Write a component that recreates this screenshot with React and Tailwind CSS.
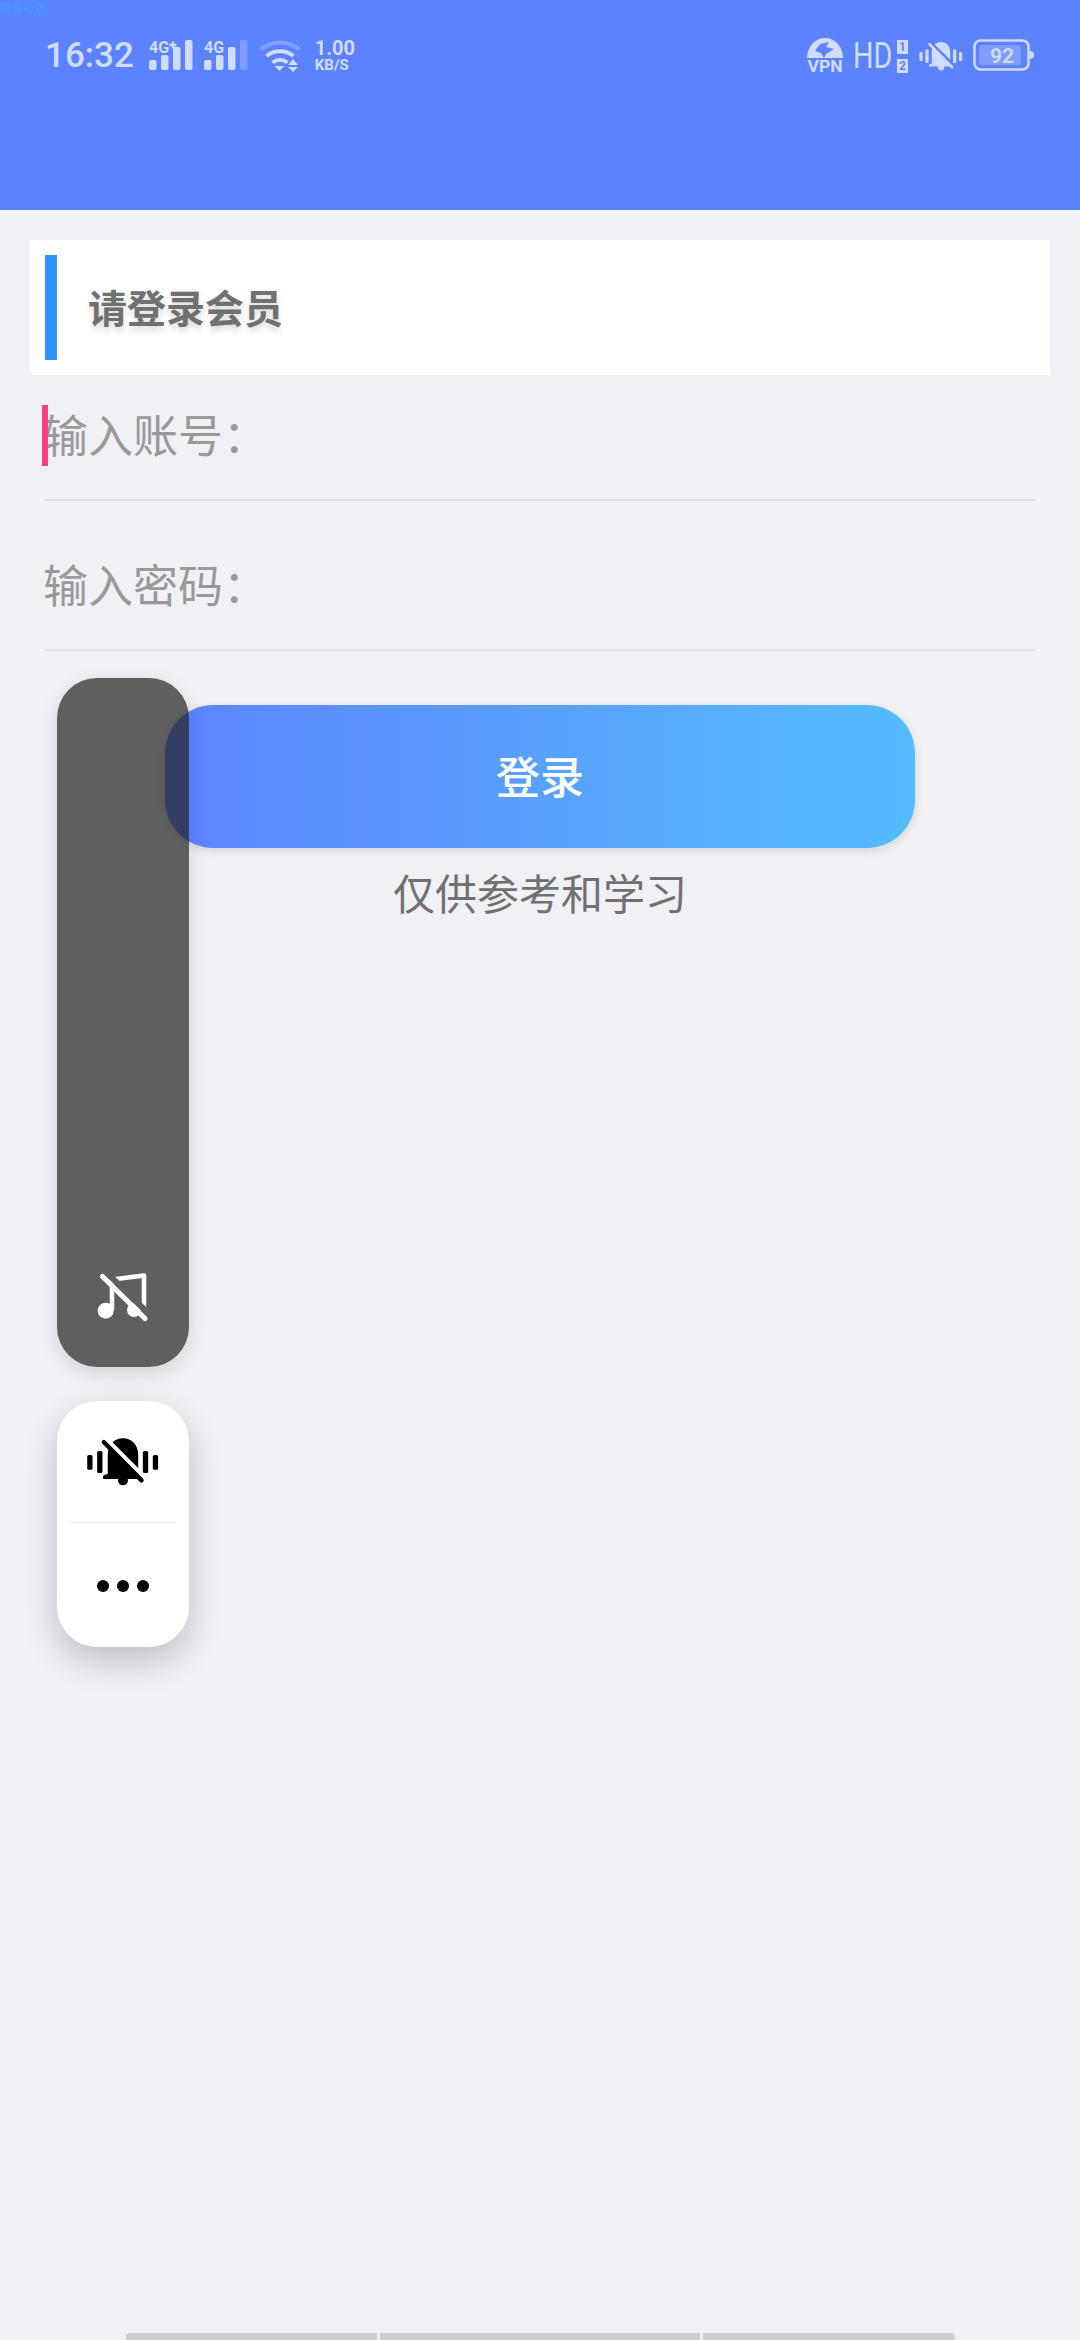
const statusColor = '#d0dbff';

function Signal({ label, plus, dimLast }) {
  return (
    <svg width="44" height="34" viewBox="0 0 44 34" className="block">
      <text x="0" y="14" fontFamily="Roboto, sans-serif" fontWeight="700" fontSize="16" fill={statusColor}>{label}</text>
      {plus && <path d="M24 2.5v7M20.5 6h7" stroke={statusColor} strokeWidth="2.4" />}
      <rect x="0" y="21" width="7.5" height="10" rx="2" fill={statusColor} />
      <rect x="12" y="16" width="7.5" height="15" rx="2" fill={statusColor} />
      <rect x="24" y="8" width="7.5" height="23" rx="2" fill={statusColor} />
      <rect x="36" y="1" width="7.5" height="30" rx="2" fill={statusColor} opacity={dimLast ? 0.3 : 1} />
    </svg>
  );
}

function Wifi() {
  return (
    <svg width="44" height="34" viewBox="0 0 44 34" className="block">
      <path d="M1.5 10.5C13 1 29 1 40.500 10.500" fill="none" stroke={statusColor} strokeOpacity="0.35" strokeWidth="4" />
      <path d="M7.500 17C15 10.500 27 10.500 34.500 17" fill="none" stroke={statusColor} strokeWidth="4" />
      <path d="M13.500 23.500C18 20 24 20 28.500 23.500" fill="none" stroke={statusColor} strokeWidth="4" />
      <path d="M15.500 27h10l-5 5z" fill={statusColor} />
      <path d="M34 20l5 6h-10z M29 28h10l-5 5z" fill={statusColor} />
    </svg>
  );
}

function Vpn() {
  return (
    <svg width="38" height="38" viewBox="0 0 38 38" className="block">
      <path d="M1 21C1.500 9 9 1 19 1S36.500 9 37 21z" fill={statusColor} />
      <path d="M9 14l5-7 9-2-3 5 8 2-8 5-2 4-3-5z" fill="#5c83ff" />
      <text x="19" y="35" textAnchor="middle" textLength="35" lengthAdjust="spacingAndGlyphs" fontFamily="Roboto, sans-serif" fontWeight="700" fontSize="17" fill={statusColor}>VPN</text>
    </svg>
  );
}

function HdBadge() {
  return (
    <div className="flex items-center gap-[6px]">
      <div className="w-[38px] whitespace-nowrap">
        <span className="block origin-left scale-x-[0.8] font-['Roboto',sans-serif] text-[36px] leading-[36px] text-[#d0dbff]">HD</span>
      </div>
      <div className="flex flex-col gap-[5px]">
        <span className="flex h-[14px] w-[11px] items-center justify-center bg-[#d0dbff] font-['Roboto',sans-serif] text-[12px] font-bold leading-none text-[#5c83ff]">1</span>
        <span className="flex h-[14px] w-[11px] items-center justify-center bg-[#d0dbff] font-['Roboto',sans-serif] text-[12px] font-bold leading-none text-[#5c83ff]">2</span>
      </div>
    </div>
  );
}

// same shape in the status bar and in the white panel, only the colours differ
function MutedBell({ width, height, fill, gap }) {
  return (
    <svg width={width} height={height} viewBox="130 555 240 160" className="block">
      <rect x="142" y="615" width="16" height="45" rx="5" fill={fill} />
      <rect x="172" y="603" width="16" height="67" rx="5" fill={fill} />
      <rect x="310" y="603" width="16" height="67" rx="5" fill={fill} />
      <rect x="340" y="615" width="16" height="45" rx="5" fill={fill} />
      <path d="M204 672V615C204 585 224 565 250 565S296 585 296 615V672L310 678V688H190V678Z" fill={fill} />
      <circle cx="250" cy="692" r="15" fill={fill} />
      <path d="M198 566L322 690" stroke={gap} strokeWidth="13" />
      <path d="M192 576L306 692" stroke={fill} strokeWidth="13" strokeLinecap="round" />
    </svg>
  );
}

function Battery() {
  return (
    <svg width="62" height="34" viewBox="0 0 62 34" className="block">
      <rect x="1.500" y="1.500" width="54" height="29" rx="6" fill="none" stroke={statusColor} strokeWidth="2.500" />
      <rect x="6" y="6" width="42" height="20" rx="3" fill={statusColor} opacity="0.3" />
      <path d="M57 12c3 0 4 2 4 4s-1 4-4 4z" fill={statusColor} />
      <text x="29" y="23.500" textAnchor="middle" fontFamily="Roboto, sans-serif" fontWeight="700" fontSize="21" fill={statusColor}>92</text>
    </svg>
  );
}

function MusicOff() {
  return (
    <svg width="56" height="50" viewBox="0 0 56 50" className="block">
      <circle cx="10.700" cy="37.700" r="8" fill="#fff" />
      <path d="M17 37V6.500L49 2.500V36" fill="none" stroke="#fff" strokeWidth="4.500" strokeLinejoin="round" />
      <circle cx="39" cy="37" r="7" fill="#fff" />
      <path d="M12 0L54 41" stroke="#606060" strokeWidth="6" />
      <path d="M7.500 3.500L50 45.500" stroke="#fff" strokeWidth="5" strokeLinecap="round" />
    </svg>
  );
}

function InputRow({ label, className }) {
  return (
    <div className={`flex items-end border-b-2 border-[#e2e2e6] pb-[43px] ${className}`}>
      <span className="ml-[-2px] text-[45px] leading-[44px] text-[#999999]">{label}</span>
    </div>
  );
}

export default function App() {
  return (
    <div className="relative h-[2340px] w-[1080px] overflow-hidden bg-[#f0f0f5] font-['Noto_Sans_CJK_SC','Noto_Sans',sans-serif]">
      <header className="relative h-[210px] bg-[#5c83ff]">
        <span className="absolute left-0 top-0 text-[12px] leading-[16px] text-[#3e9bff]">境留社区</span>
        <div className="flex items-center justify-between pl-[45px] pr-[45px] pt-[37px]">
          <div className="flex items-center">
            <span className="font-['Roboto',sans-serif] text-[35px] font-medium leading-[36px] text-[#d0dbff]">16:32</span>
            <div className="ml-[15px]"><Signal label="4G" plus /></div>
            <div className="ml-[11px]"><Signal label="4G" dimLast /></div>
            <div className="ml-[11px]"><Wifi /></div>
            <div className="ml-[12px] flex flex-col font-['Roboto',sans-serif] font-bold text-[#d0dbff]">
              <span className="text-[20px] leading-[19px]">1.00</span>
              <span className="text-[15px] leading-[15px]">KB/S</span>
            </div>
          </div>
          <div className="flex items-center">
            <Vpn />
            <div className="ml-[9px]"><HdBadge /></div>
            <div className="ml-[9px]"><MutedBell width={48} height={32} fill={statusColor} gap="#5c83ff" /></div>
            <div className="ml-[8px]"><Battery /></div>
          </div>
        </div>
      </header>

      <main className="px-[30px] pt-[30px]">
        <div className="flex h-[135px] items-center bg-white pl-[15px]">
          <div className="h-[105px] w-[12px] bg-[#3092ff]" />
          <span className="mb-[3px] ml-[31px] text-[39px] font-bold leading-[50px] text-[#707070] [text-shadow:0_4px_6px_rgba(0,0,0,0.15)]">请登录会员</span>
        </div>

        <div className="px-[15px]">
          <div className="relative">
            <InputRow label="输入账号：" className="h-[126px]" />
            <div className="absolute left-[-3px] top-[30px] h-[61px] w-[6px] bg-[#ff3d85]" />
          </div>
          <InputRow label="输入密码：" className="h-[150px]" />
        </div>

        <button className="mx-auto mt-[54px] flex h-[143px] w-[750px] items-center justify-center rounded-[48px] bg-linear-to-r from-[#5c83ff] to-[#54bcff] pb-[4px] text-[44px] font-medium leading-none text-white shadow-[0_3px_8px_rgba(0,0,0,0.12)]">
          登录
        </button>
        <p className="mt-[20px] text-center text-[42px] leading-[48px] text-[#707070]">仅供参考和学习</p>
      </main>

      <aside className="absolute left-[57px] top-[678px] flex w-[132px] flex-col gap-[34px]">
        <div className="flex h-[689px] flex-col items-center justify-end rounded-[40px] bg-[rgba(33,33,33,0.7)] pb-[44px] shadow-[0_6px_20px_rgba(0,0,0,0.12)]">
          <MusicOff />
        </div>
        <div className="flex h-[246px] flex-col rounded-[40px] bg-white px-[12px] shadow-[0_14px_34px_rgba(0,0,0,0.2)]">
          <div className="flex h-[122px] items-center justify-center border-b border-[#f0f0f2]">
            <MutedBell width={80} height={53} fill="#000" gap="#fff" />
          </div>
          <div className="flex flex-1 items-center justify-center gap-[8px] pt-[2px]">
            <span className="h-[12px] w-[12px] rounded-full bg-black" />
            <span className="h-[12px] w-[12px] rounded-full bg-black" />
            <span className="h-[12px] w-[12px] rounded-full bg-black" />
          </div>
        </div>
      </aside>

      <div className="absolute bottom-0 left-[126px] flex h-[7px] w-[829px] gap-[3px] overflow-hidden rounded-t-[4px]">
        <div className="w-[251px] bg-[#cdcdd2]" />
        <div className="w-[320px] bg-[#cdcdd2]" />
        <div className="flex-1 bg-[#cdcdd2]" />
      </div>
    </div>
  );
}
